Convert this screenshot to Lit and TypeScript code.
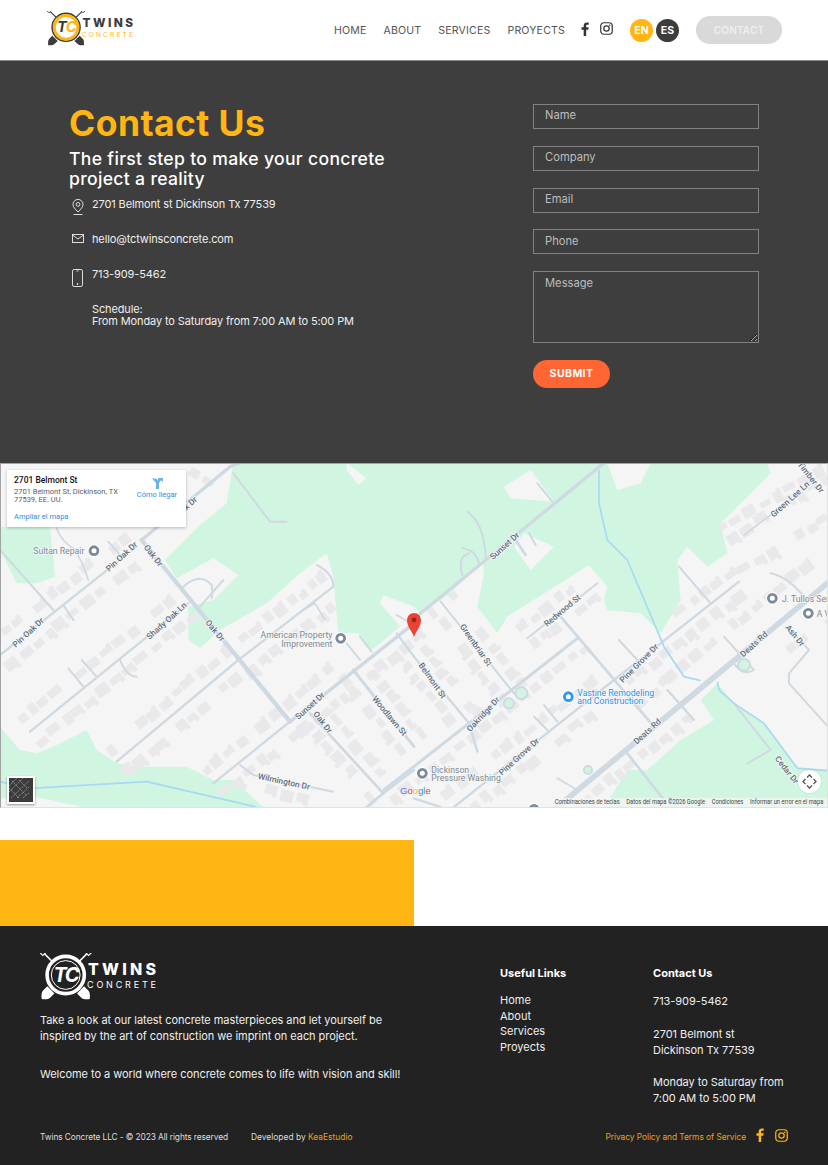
import { LitElement, html, css, svg, unsafeCSS } from "lit";
import { customElement, property } from "lit/decorators.js";

const FONT = unsafeCSS(`Inter, "Open Sans", "Liberation Sans", sans-serif`);

const fIcon = (c: string) => html`<svg viewBox="0 0 10 18" width="8" height="14"><path fill=${c} d="M6.5 18V10h2.7l.5-3.1H6.5V5c0-.9.3-1.500 1.600-1.500H9.800V.7C9.500.7 8.500.6 7.400.6 5 .6 3.300 2 3.300 4.700v2.200H.5V10h2.800v8z"/></svg>`;
const igIcon = (c: string) => html`<svg viewBox="0 0 14 14" width="13" height="13" fill="none" stroke=${c} stroke-width="1.3"><rect x=".8" y=".8" width="12.400" height="12.400" rx="3.400"/><circle cx="7" cy="7" r="2.900"/><circle cx="10.500" cy="3.500" r=".8" fill=${c} stroke="none"/></svg>`;

@customElement("tc-logo")
class TcLogo extends LitElement {
  @property() variant = "light";
  static styles = css`:host{display:block;line-height:0;letter-spacing:0} svg{width:100%;height:auto;display:block}`;
  render() {
    const dark = this.variant === "dark";
    const metal = dark ? "#ffffff" : "#3c3c3c";
    const ring = dark ? "#ffffff" : "#ffb612";
    const inner = dark ? "#222222" : "#ffffff";
    const t = dark ? "#ffffff" : "#3c3c3c";
    const c = dark ? "#ffffff" : "#ffb612";
    const sub = dark ? "#ffffff" : "#ffb612";
    const shovel = (tr: string) => svg`<g transform=${tr}>
      <line x1="0" y1="-30" x2="0" y2="20" stroke=${metal} stroke-width="1.6"/>
      <path d="M-2.400-33.500h4.800v3.500h-4.800z" fill="none" stroke=${metal} stroke-width="1.200"/>
      <path d="M-5 21h10v6c0 2.500-2.500 5-5 7-2.500-2-5-4.500-5-7z" fill=${metal}/>
    </g>`;
    return html`<svg viewBox="0 0 116 48" role="img" aria-label="Twins Concrete">
      ${shovel("translate(25.7 22) rotate(45)")}
      ${shovel("translate(25.7 22) rotate(-45)")}
      ${dark
        ? svg`<circle cx="25.7" cy="22" r="18.6" fill=${inner} stroke=${ring} stroke-width="3.6"/><circle cx="25.7" cy="22" r="14.4" fill="none" stroke=${ring} stroke-width="1"/>`
        : svg`<circle cx="25.7" cy="22" r="18.8" fill=${inner} stroke="#3c3c3c" stroke-width="2.2"/><circle cx="25.7" cy="22" r="16" fill="none" stroke=${ring} stroke-width="4"/>`}
      <text x="13.500" y="29" letter-spacing="-1.500" font-family="Inter, sans-serif" font-style="italic" font-weight="700" font-size="20"><tspan fill=${t}>T</tspan><tspan fill=${c}>C</tspan></text>
      <text x="48" y="22" textLength="68" lengthAdjust="spacing" font-family="Inter, sans-serif" font-weight="800" font-size="16" fill=${t}>TWINS</text>
      <text x="47" y="34.700" textLength="69" lengthAdjust="spacing" font-family="Inter, sans-serif" font-weight="400" font-size="9" fill=${sub}>CONCRETE</text>
    </svg>`;
  }
}

const hash = (n: number) => {
  const s = Math.sin(n * 127.1 + 11.7) * 43758.5453;
  return s - Math.floor(s);
};

function houses(x1: number, y1: number, x2: number, y2: number, off: number, seed: number) {
  const len = Math.hypot(x2 - x1, y2 - y1);
  const ang = (Math.atan2(y2 - y1, x2 - x1) * 180) / Math.PI;
  const ux = (x2 - x1) / len, uy = (y2 - y1) / len;
  const sign = off < 0 ? -1 : 1;
  const out = [];
  let d = 10, i = seed * 37;
  while (d < len) {
    i += 11;
    const w = 22 + hash(i) * 22, h = 18 + hash(i + 3) * 18;
    const o = off + sign * hash(i + 7) * 14;
    if (hash(i + 5) > 0.1) {
      const x = x1 + ux * d - uy * o, y = y1 + uy * d + ux * o;
      const tr = `translate(${x.toFixed(1)} ${y.toFixed(1)}) rotate(${ang.toFixed(1)})`;
      out.push(svg`<rect x=${(-w / 2).toFixed(1)} y=${(-h / 2).toFixed(1)} width=${w.toFixed(1)} height=${h.toFixed(1)} transform=${tr}/>`);
      if (hash(i + 2) > 0.55) {
        out.push(svg`<rect x=${(w / 2 - 12).toFixed(1)} y=${(sign * h / 2 - 6).toFixed(1)} width="13" height="14" transform=${tr}/>`);
      }
    }
    d += w + 5 + hash(i + 9) * 12;
  }
  return out;
}

const road = (d: string, w = 7) => svg`<path d=${d} stroke-width=${w}/>`;
const lab = (x: number, y: number, a: number, t: string) => svg`<text class="rd" text-anchor="middle" transform="translate(${x} ${y}) rotate(${a})" dy="8">${t}</text>`;
const poi = (x: number, y: number, c = "#7b8a9a") => svg`<g transform="translate(${x} ${y})"><path d="M-17 8a19 19 0 1 1 34 0L0 23z" fill="#fff" opacity=".95"/><circle r="16" fill=${c}/><circle r="7.500" fill="#fff"/></g>`;

@customElement("map-view")
class MapView extends LitElement {
  static styles = css`
    :host{display:block;position:relative;height:345px;overflow:hidden;background:#f5f5f5;letter-spacing:0}
    :host::after{content:"";position:absolute;inset:0;border:1px solid #a2a2a2;border-bottom-color:#e2e2e2;border-right-color:#e2e2e2;pointer-events:none}
    svg.m{display:block;width:828px;height:345px}
    .green{fill:#d0f6e2}
    .land{fill:#f5f5f5}
    .h{fill:#e9e9eb}
    .r{fill:none;stroke:#cfd9e2;stroke-linecap:round;stroke-linejoin:round}
    .w{fill:none;stroke:#a7d9f4;stroke-width:5;stroke-linejoin:round}
    text{font-family:Roboto,"Liberation Sans",sans-serif}
    .rd{font-size:25px;font-weight:500;fill:#5d6e80;stroke:#f7f7f7;stroke-width:5px;paint-order:stroke}
    .pl{font-size:26px;fill:#808a94;stroke:#f7f7f7;stroke-width:4px;paint-order:stroke}
    .bl{font-size:26px;fill:#2b95ec;stroke:#f7f7f7;stroke-width:4px;paint-order:stroke}
    .att{font-size:19px;fill:#444}
    .card{position:absolute;left:7px;top:7px;width:179px;height:57px;background:#fff;box-shadow:0 1px 3px rgba(0,0,0,.25);font-family:Roboto,"Liberation Sans",sans-serif;font-size:7.5px;line-height:8px;color:#5b5b5b}
    .card b{position:absolute;left:7px;top:5px;font-size:8.500px;line-height:10px;font-weight:500;color:#111}
    .addr{position:absolute;left:7px;top:18px;width:110px}
    .big{position:absolute;left:7px;top:43px;color:#2b8fe6}
    .dir{position:absolute;left:125px;top:7px;width:50px;text-align:center;color:#2b8fe6;white-space:nowrap}
    .dir svg{display:block;margin:0 auto 2px}
    .sat{position:absolute;left:7px;top:313px;width:24px;height:24px;border:2px solid #fff;box-shadow:0 1px 2px rgba(0,0,0,.4);background:#3c3c3c;overflow:hidden}
    .fs{position:absolute;left:798px;top:307px;width:23px;height:23px;border-radius:50%;background:#fff;box-shadow:0 0 2px rgba(0,0,0,.15)}
    .g{position:absolute;left:400px;top:323px;font:500 9.500px/10px "Liberation Sans",sans-serif}
    .g .b{color:#4285f4}.g .rr{color:#ea4335}.g .y{color:#fbbc05}.g .gg{color:#34a853}
  `;
  render() {
    return html`<svg class="m" viewBox="0 0 828 345" aria-label="Mapa">
      <g transform="translate(0 -3) scale(.33333)">
        <path class="green" d="M700 9L680 130 600 195 495 300 530 355 640 295 715 345 640 420 565 440 565 540 600 565 660 510 800 430 900 340 980 280 1000 350 1015 520 1075 520 1115 570 1200 500 1140 430 1150 405 1242 440 1242 9Z"/>
        <path class="land" d="M1040 9L1100 55 1075 75 1040 30Z"/>
        <path class="green" d="M0 200L150 200 165 350 110 370 50 370 0 270Z"/>
        <path class="green" d="M0 800L60 870 110 880 160 860 260 810 290 870 350 910 420 920 560 920 640 960 700 960 790 1041 250 1041 100 1010 0 1015Z"/>
        <g class="h">
          ${houses(0, 585, 410, 260, 34, 1)}${houses(0, 585, 410, 260, -34, 2)}
          ${houses(90, 815, 565, 430, 34, 3)}${houses(90, 815, 565, 430, -34, 4)}
          ${houses(350, 905, 715, 600, 34, 5)}${houses(350, 905, 715, 600, -34, 6)}
          ${houses(715, 600, 1000, 380, -34, 7)}${houses(725, 610, 990, 400, 30, 8)}
          ${houses(640, 970, 870, 785, 34, 9)}${houses(640, 970, 870, 785, -34, 10)}
          ${houses(880, 780, 1242, 490, 34, 11)}${houses(880, 760, 1040, 630, -30, 12)}
          ${houses(1060, 630, 1242, 860, 30, 13)}${houses(1060, 630, 1242, 860, -30, 14)}
          ${houses(950, 770, 1150, 1000, 26, 15)}${houses(950, 770, 1130, 980, -26, 16)}
          ${houses(720, 930, 1000, 1000, 34, 17)}
          ${houses(560, 60, 680, 130, -20, 18)}
        </g>
        <g class="r">
          ${road("M425 240L690 20 725 5", 10)}
          ${road("M425 240L870 785", 13)}
          ${road("M1242 490L870 785", 10)}
          ${road("M870 785L640 970", 7)}
          ${road("M930 760L1150 1000 1100 1041", 8)}
          ${road("M0 585L410 260", 7)}
          ${road("M0 270L160 450", 6)}
          ${road("M190 435L220 480", 6)}
          ${road("M170 205Q180 240 225 270 250 310 265 360", 5)}
          ${road("M325 245L365 290", 5)}
          ${road("M90 815L565 430", 7)}
          ${road("M600 440L670 360", 6)}
          ${road("M550 380Q600 335 635 375 640 395 635 415", 6)}
          ${road("M205 625L250 680", 6)}
          ${road("M245 600L290 650", 6)}
          ${road("M360 600Q380 650 410 650", 6)}
          ${road("M350 905L715 600 1000 380", 7)}
          ${road("M950 315Q1000 340 1000 380", 6)}
          ${road("M910 450L945 430 975 480", 5)}
          ${road("M1040 550L1080 600", 6)}
          ${road("M1080 530L1115 575", 6)}
          ${road("M1060 630L1242 860", 9)}
          ${road("M720 915L760 945 1000 995", 6)}
          ${road("M700 40L810 185 860 185", 6)}
          ${road("M1190 465L1242 495", 6)}
          ${road("M1190 520L1242 590", 7)}
          ${road("M1150 1000L1242 930", 7)}
        </g>
        <path class="w" d="M0 965L90 985 440 965 770 1041"/>
        ${lab(560, 140, -42, "Oak Dr")}${lab(460, 287, 52, "Oak Dr")}
        ${lab(365, 290, -43, "Pin Oak Dr")}${lab(85, 518, -43, "Pin Oak Dr")}
        ${lab(500, 483, -42, "Shady Oak Ln")}${lab(645, 512, 50, "Oak Dr")}
        ${lab(930, 738, -42, "Sunset Dr")}${lab(968, 787, 52, "Oak Dr")}
        ${lab(1168, 768, 50, "Woodlawn St")}${lab(852, 965, 12, "Wilmington Dr")}
        ${poi(282, 272)}${poi(1022, 535)}
        <text class="pl" x="253" y="283" text-anchor="end">Sultan Repair</text>
        <text class="pl" x="997" y="535" text-anchor="end">American Property</text>
        <text class="pl" x="997" y="560" text-anchor="end">Improvement</text>
      </g>
      <g transform="translate(414 -3) scale(.33333)">
        <path class="green" d="M0 9L580 9 610 90 680 70 710 9 1060 9 1070 40 920 190 940 280 880 320 820 260 790 300 800 420 740 520 680 460 580 450 570 420 580 380 525 315 280 470 250 520 190 440 210 340 205 300 110 400 20 460 0 440Z"/>
        <path class="land" d="M270 80L350 30 420 125 290 115Z"/>
        <path class="land" d="M330 220L420 260 350 330 300 260Z"/>
        <path class="green" d="M570 1041L640 930 700 930 800 840 900 780 860 720 910 670 960 730 1060 800 1150 920 1242 930 1242 1041Z"/>
        <g class="h">
          ${houses(80, 425, 300, 700, 30, 21)}${houses(80, 425, 300, 700, -30, 22)}
          ${houses(0, 590, 165, 790, 30, 23)}${houses(0, 590, 165, 790, -30, 24)}
          ${houses(-90, 990, 490, 535, 32, 25)}
          ${houses(120, 1040, 600, 660, -32, 26)}${houses(120, 1040, 600, 660, 32, 27)}
          ${houses(700, 770, 1240, 320, -36, 28)}${houses(430, 1040, 800, 735, 36, 29)}
          ${houses(620, 640, 975, 365, 30, 30)}${houses(810, 490, 975, 365, -30, 31)}
          ${houses(340, 535, 550, 370, -28, 32)}${houses(340, 535, 550, 370, 22, 33)}
          ${houses(930, 210, 1242, 10, 26, 34)}${houses(930, 230, 1242, 60, -24, 35)}
          ${houses(960, 300, 1242, 130, 30, 36)}${houses(1100, 540, 1242, 430, 34, 37)}
        </g>
        <g class="r">
          ${road("M570 9L20 460 0 478", 10)}
          ${road("M80 425L300 700", 6)}
          ${road("M0 590L165 790 190 875", 7)}
          ${road("M-90 990L490 535", 9)}
          ${road("M440 470L720 800", 8)}
          ${road("M340 535L550 370", 6)}
          ${road("M120 1041L600 660 975 365", 7)}
          ${road("M615 540L670 600", 6)}
          ${road("M795 320L890 430", 6)}
          ${road("M990 225L1090 150", 5)}
          ${road("M345 220L365 255", 6)}
          ${road("M305 240L335 285", 8)}
          ${road("M370 70L415 125", 6)}
          ${road("M160 155Q210 190 215 290", 6)}
          ${road("M145 265Q185 270 195 310", 6)}
          ${road("M145 345Q130 290 165 280", 6)}
          ${road("M1070 340Q1120 350 1170 410", 6)}
          ${road("M1130 510L1185 570 1125 640 1125 670 1242 800", 6)}
          ${road("M640 880L750 1020", 8)}
          ${road("M930 530L1020 630Q985 650 960 610", 6)}
          ${road("M760 690L840 780", 7)}
          ${road("M960 730L1070 870 1000 910", 6)}
          ${road("M390 735L430 785", 6)}
          ${road("M360 770L400 810", 6)}
          ${road("M0 1015L80 1041", 7)}
          ${road("M430 955L490 990", 5)}
          ${road("M430 1041L1242 368", 17)}
          <circle cx="285" cy="730" r="15" fill="#d0f6e2" stroke-width="6"/>
          <circle cx="322" cy="700" r="18" fill="#d0f6e2" stroke-width="6"/>
          <circle cx="522" cy="930" r="12" fill="#d0f6e2" stroke-width="6"/>
          <circle cx="990" cy="615" r="18" fill="#d0f6e2" stroke-width="6"/>
        </g>
        <path class="w" d="M555 30L555 130 580 240 640 300 750 560 810 650 860 662"/>
        <path class="w" d="M910 665L915 690 960 730 1050 790 1150 925 1242 932"/>
        ${lab(272, 258, -42, "Sunset Dr")}${lab(1190, 52, 52, "Timber Dr")}
        ${lab(1128, 118, -42, "Green Lee Ln")}${lab(445, 452, -40, "Redwood St")}
        ${lab(185, 555, 55, "Greenbriar St")}${lab(55, 662, 55, "Belmont St")}
        ${lab(208, 763, -47, "Oakridge Dr")}${lab(675, 610, -45, "Pine Grove Dr")}
        ${lab(315, 890, -42, "Pine Grove Dr")}${lab(1020, 553, -42, "Deats Rd")}
        ${lab(700, 815, -42, "Deats Rd")}${lab(1143, 527, 50, "Ash Dr")}${lab(1118, 930, 52, "Cedar Dr")}
        ${poi(463, 710, "#2f97ee")}${poi(25, 940)}${poi(1075, 415)}${poi(1183, 460)}${poi(360, 1048)}
        <text class="bl" x="490" y="708">Vastine Remodeling</text>
        <text class="bl" x="490" y="732">and Construction</text>
        <text class="pl" x="52" y="938">Dickinson</text>
        <text class="pl" x="52" y="963">Pressure Washing</text>
        <text class="pl" x="1104" y="426">J. Tullos Ser</text>
        <text class="pl" x="1208" y="470">A V</text>
        <rect x="412" y="1014" width="830" height="27" fill="#f5f5f5" opacity=".75"/>
        <text class="att" x="422" y="1033" textLength="195" lengthAdjust="spacingAndGlyphs">Combinaciones de teclas</text>
        <text class="att" x="637" y="1033" textLength="236" lengthAdjust="spacingAndGlyphs">Datos del mapa ©2026 Google</text>
        <text class="att" x="893" y="1033" textLength="95" lengthAdjust="spacingAndGlyphs">Condiciones</text>
        <text class="att" x="1008" y="1033" textLength="220" lengthAdjust="spacingAndGlyphs">Informar un error en el mapa</text>
      </g>
      <g transform="translate(414 163)">
        <path d="M0 11C-2 5-7 1-7-6a7 7 0 0 1 14 0C7 1 2 5 0 11z" fill="#ea4335"/>
        <circle cy="-6" r="2.400" fill="#a3201a"/>
      </g>
    </svg>
    <div class="card">
      <b>2701 Belmont St</b>
      <div class="addr">2701 Belmont St, Dickinson, TX 77539, EE. UU.</div>
      <div class="big">Ampliar el mapa</div>
      <div class="dir"><svg width="11" height="12" viewBox="0 0 11 12"><path d="M4 12V6L0 1.500h4L6 4M6 1h5v4L9 3.200 7 6v6H4" fill="#6cb2ee"/></svg>Cómo llegar</div>
    </div>
    <div class="sat"><svg width="20" height="20" viewBox="0 0 20 20" stroke="#8a8a8a" stroke-width="1" fill="none"><path d="M0 8L8 0M0 14L14 0M2 20L20 3M8 20L20 9M14 20L20 15M3 3l14 14M0 10l10 10M10 2l8 8" stroke-dasharray="2 1"/></svg></div>
    <div class="g"><span class="b">G</span><span class="rr">o</span><span class="y">o</span><span class="b">g</span><span class="gg">l</span><span class="rr">e</span></div>
    <div class="fs"><svg width="23" height="23" viewBox="0 0 23 23" fill="none" stroke="#555" stroke-width="1.3"><path d="M9 7.500l2.500-2.500 2.500 2.500M9 15.500l2.500 2.500 2.500-2.500M7.500 9L5 11.500 7.500 14M15.500 9l2.500 2.500-2.500 2.500"/></svg></div>`;
  }
}

@customElement("app-root")
class AppRoot extends LitElement {
  static styles = css`
    :host{display:block;width:828px;font-family:${FONT};background:#fff}
    *{box-sizing:border-box}
    a{color:inherit;text-decoration:none}
    header{height:60px;display:flex;align-items:center;padding:0 46px 0 47px;background:#fff}
    header tc-logo{width:86px;margin-top:-2px}
    nav{margin-left:auto;display:flex;align-items:center;font-size:10.6px;color:#555;gap:17px;letter-spacing:.015em}
    .soc{display:flex;align-items:center;gap:11px;margin-left:-1px;margin-top:-3px}
    .langs{display:flex;gap:3px}
    .lang{width:23px;height:23px;border-radius:50%;display:flex;align-items:center;justify-content:center;font-weight:700;font-size:10.5px;color:#fff;letter-spacing:0}
    .en{background:#ffb612}.es{background:#3c3c3c}
    .cta{width:86px;height:28px;border-radius:14px;background:#d9d9d9;color:#efefef;font-weight:600;font-size:10px;display:flex;align-items:center;justify-content:center}
    .contact{height:403px;background:#3e3e3e;border-top:1px solid #8a8a8a;display:flex;padding:43px 0 0 69px;color:#eee}
    .left{width:464px}
    h1{margin:0;font-size:35.5px;line-height:40px;font-weight:700;color:#ffb612;letter-spacing:.012em}
    h2{margin:5px 0 0;font-size:17.6px;line-height:20px;font-weight:500;color:#fff;width:340px;letter-spacing:.018em}
    .info{margin-top:9px;font-size:11px;line-height:12px;color:#eee;letter-spacing:-.13px}
    .row{display:grid;grid-template-columns:23px 1fr;height:35px}
    .row svg{display:block;margin:1px 0 0 3px}
    .form{width:226px;display:flex;flex-direction:column;gap:16.8px}
    input,textarea{display:block;width:100%;height:25px;background:transparent;border:1px solid #818181;color:#ddd;font:11.2px/14px ${FONT};padding:0 11px;border-radius:0;outline:none}
    input{padding-bottom:2.5px}
    textarea{height:72px;padding:4px 11px;margin:0}
    ::placeholder{color:#bdbdbd;opacity:1}
    .submit{width:77px;height:28px;border:0;border-radius:14px;background:#ff6633;color:#fff;font:700 10.5px ${FONT};letter-spacing:.04em;padding:0}
    .gap{height:32px}
    .yellow{height:86px;width:414px;background:#ffb612}
    footer{height:239px;background:#222;color:#eee;padding:27px 40px 0;font-size:11px;display:flex;flex-direction:column}
    .cols{display:grid;grid-template-columns:460px 153px 1fr;margin-right:-40px}
    footer tc-logo{width:116px;margin-bottom:11px}
    .about p{margin:0 0 22px;line-height:16px;width:372px;letter-spacing:-.05px}
    .cols h4{margin:13px 0 13px;font-size:11px;line-height:14px;font-weight:700;color:#fff}
    .lk div{height:15.6px;line-height:15.6px}
    .ct p{margin:0 0 16.5px;line-height:16px;letter-spacing:-.05px}
    .bot{margin-top:auto;margin-bottom:23px;display:flex;align-items:center;font-size:8.4px;color:#ddd;letter-spacing:-.05px}
    .copy{letter-spacing:-.11px}
    .dev{margin-left:23px;letter-spacing:.02px}
    .dev a,.priv{color:#e3a21f}
    .priv{margin-left:auto}
    .bsoc{display:flex;align-items:center;gap:11px;margin:-3px 0 0 10px}
  `;
  render() {
    return html`
      <header>
        <tc-logo variant="light"></tc-logo>
        <nav>
          <a>HOME</a><a>ABOUT</a><a>SERVICES</a><a>PROYECTS</a>
          <div class="soc">${fIcon("#333")}${igIcon("#333")}</div>
          <div class="langs"><div class="lang en">EN</div><div class="lang es">ES</div></div>
          <a class="cta">CONTACT</a>
        </nav>
      </header>
      <section class="contact">
        <div class="left">
          <h1>Contact Us</h1>
          <h2>The first step to make your concrete project a reality</h2>
          <div class="info">
            <div class="row">
              <svg width="12" height="17" viewBox="0 0 12 17" fill="none" stroke="#eee" stroke-width=".9"><path d="M6 13C3 10 1 8 1 5.400a5 5 0 0 1 10 0C11 8 9 10 6 13z"/><circle cx="6" cy="5.400" r="1.900"/><path d="M1.500 15.500h9"/></svg>
              <span>2701 Belmont st Dickinson Tx 77539</span>
            </div>
            <div class="row">
              <svg width="12" height="9" viewBox="0 0 12 9" fill="none" stroke="#eee" stroke-width=".9"><rect x=".5" y=".5" width="11" height="8"/><path d="M.5 1L6 5l5.500-4"/></svg>
              <span>hello@tctwinsconcrete.com</span>
            </div>
            <div class="row">
              <svg width="11" height="18" viewBox="0 0 11 18" fill="none" stroke="#eee" stroke-width=".9"><rect x=".5" y=".5" width="10" height="17" rx="1.600"/><path d="M4.500 2h2"/><circle cx="5.500" cy="15" r=".5" fill="#eee"/></svg>
              <span>713-909-5462</span>
            </div>
            <div class="row"><span></span><span>Schedule:<br />From Monday to Saturday from 7:00 AM to 5:00 PM</span></div>
          </div>
        </div>
        <form class="form">
          <input placeholder="Name" />
          <input placeholder="Company" />
          <input placeholder="Email" />
          <input placeholder="Phone" />
          <textarea placeholder="Message"></textarea>
          <button class="submit" type="button">SUBMIT</button>
        </form>
      </section>
      <map-view></map-view>
      <div class="gap"></div>
      <div class="yellow"></div>
      <footer>
        <div class="cols">
          <div class="about">
            <tc-logo variant="dark"></tc-logo>
            <p>Take a look at our latest concrete masterpieces and let yourself be inspired by the art of construction we imprint on each project.</p>
            <p>Welcome to a world where concrete comes to life with vision and skill!</p>
          </div>
          <div>
            <h4>Useful Links</h4>
            <div class="lk"><div>Home</div><div>About</div><div>Services</div><div>Proyects</div></div>
          </div>
          <div class="ct">
            <h4>Contact Us</h4>
            <p>713-909-5462</p>
            <p>2701 Belmont st<br />Dickinson Tx 77539</p>
            <p>Monday to Saturday from<br />7:00 AM to 5:00 PM</p>
          </div>
        </div>
        <div class="bot">
          <span class="copy">Twins Concrete LLC - © 2023 All rights reserved</span>
          <span class="dev">Developed by <a>KeaEstudio</a></span>
          <a class="priv">Privacy Policy and Terms of Service</a>
          <div class="bsoc">${fIcon("#ffb612")}${igIcon("#ffb612")}</div>
        </div>
      </footer>
    `;
  }
}
